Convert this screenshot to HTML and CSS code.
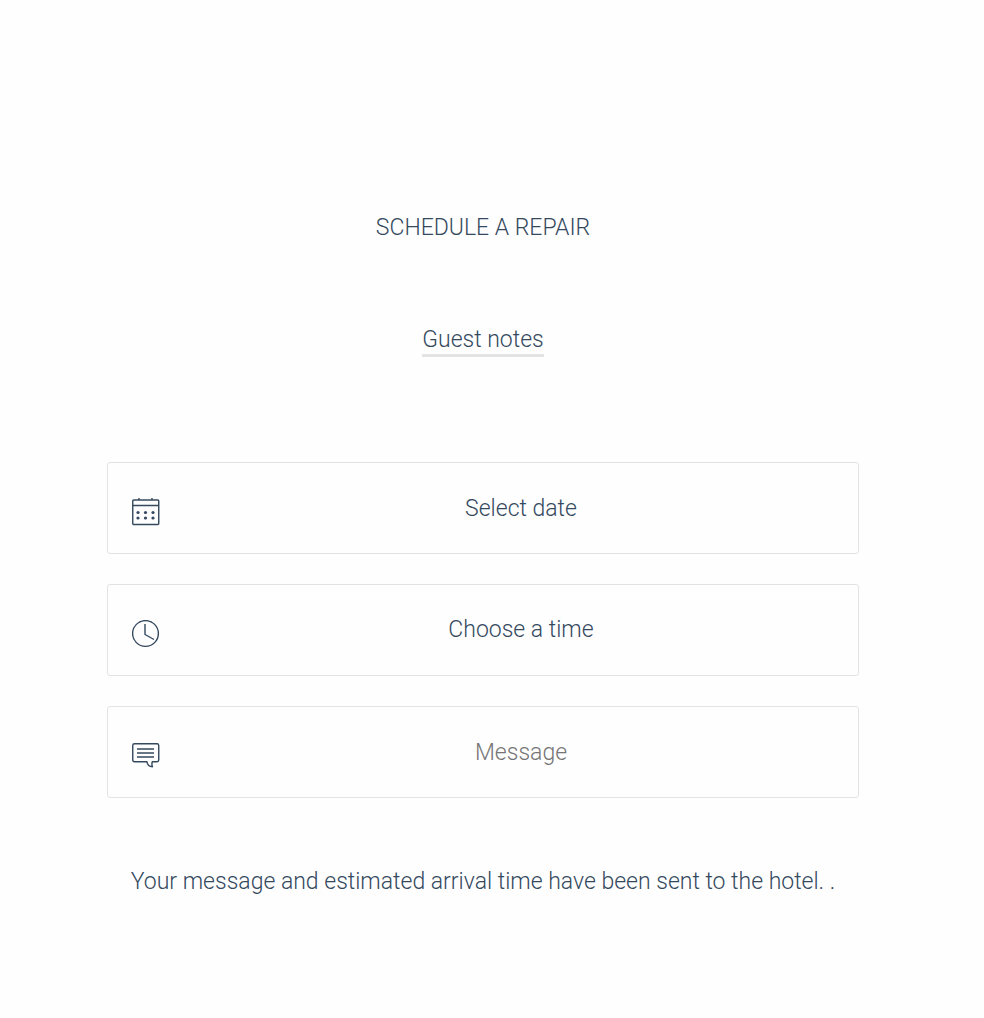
FILE: index.html
```html
<!DOCTYPE html>
<html lang="en">
<head>
<meta charset="utf-8">
<meta name="viewport" content="width=device-width, initial-scale=1">
<title>Schedule a repair</title>
<link rel="stylesheet" href="styles.css">
</head>
<body>
<main class="page">
  <h1 class="title">SCHEDULE A REPAIR</h1>
  <a class="notes-link" href="#notes">Guest notes</a>
  <form class="form" id="notes">
    <div class="field">
      <label class="field-icon" for="date" aria-label="Date">
        <svg class="icon" viewBox="0 0 28 28" aria-hidden="true">
          <rect x="0.750" y="2" width="26" height="24.500" rx="1"/>
          <path d="M1 7.500H27M7 0V2M20 0V2"/>
          <g class="dots">
            <circle cx="6" cy="14.500" r="1.600"/><circle cx="13.500" cy="14.500" r="1.600"/><circle cx="21" cy="14.500" r="1.600"/>
            <circle cx="6" cy="20" r="1.600"/><circle cx="13.500" cy="20" r="1.600"/><circle cx="21" cy="20" r="1.600"/>
          </g>
        </svg>
      </label>
      <input class="control" id="date" type="text" value="Select date" readonly>
    </div>
    <div class="field">
      <label class="field-icon" for="time" aria-label="Time">
        <svg class="icon" viewBox="0 0 28 28" aria-hidden="true">
          <circle cx="13.500" cy="13.500" r="12.900"/>
          <path d="M13 4V14.500L22 19.500"/>
        </svg>
      </label>
      <select class="control" id="time"><option>Choose a time</option></select>
    </div>
    <div class="field">
      <label class="field-icon" for="message" aria-label="Message">
        <svg class="icon" viewBox="0 0 28 28" aria-hidden="true">
          <path d="M2.500 1.750H25Q26.750 1.750 26.750 3.500V18Q26.750 19.750 25 19.750H20.250Q19.500 23 20.500 24.750Q15.500 24.500 15 19.750H2.500Q0.750 19.750 0.750 18V3.500Q0.750 1.750 2.500 1.750Z"/>
          <path d="M5 7H22M5 11H22M5 15H22"/>
        </svg>
      </label>
      <input class="control" id="message" type="text" placeholder="Message">
    </div>
  </form>
  <p class="status">Your message and estimated arrival time have been sent to the hotel. .</p>
</main>
</body>
</html>
```
FILE: styles.css
```css
* { box-sizing: border-box; }
body {
  margin: 0;
  background: #fefefe;
  color: #34495e;
  font-family: Roboto, "Open Sans", sans-serif;
  font-size: 23px;
  font-weight: 300;
  line-height: 28px;
}
.page {
  display: flex;
  flex-direction: column;
  align-items: center;
  padding: 214px 125px 120px 107px;
}
.title {
  margin: 0 0 84px;
  font-size: 23px;
  font-weight: 300;
}
.notes-link {
  color: inherit;
  text-decoration: none;
  border-bottom: 3px solid #e3e3e3;
}
.form {
  display: flex;
  flex-direction: column;
  gap: 30px;
  width: 100%;
  max-width: 752px;
  margin: 105px 0 70px;
}
.field {
  display: flex;
  align-items: center;
  gap: 24px;
  height: 92px;
  padding-left: 24px;
  border: 1px solid #e3e3e3;
  border-radius: 3px;
}
.field-icon {
  display: flex;
  padding-top: 8px;
}
.icon {
  width: 28px;
  height: 28px;
  fill: none;
  stroke: #34495e;
  stroke-width: 1.4;
  stroke-linejoin: round;
}
.dots {
  fill: #34495e;
  stroke: none;
}
.control {
  flex: 1;
  min-width: 0;
  height: 90px;
  padding: 0;
  border: 0;
  outline: 0;
  appearance: none;
  background: transparent;
  color: inherit;
  font: inherit;
  text-align: center;
  text-align-last: center;
}
.control::placeholder {
  color: #757575;
  opacity: 1;
}
.status {
  margin: 0;
  text-align: center;
}
```
